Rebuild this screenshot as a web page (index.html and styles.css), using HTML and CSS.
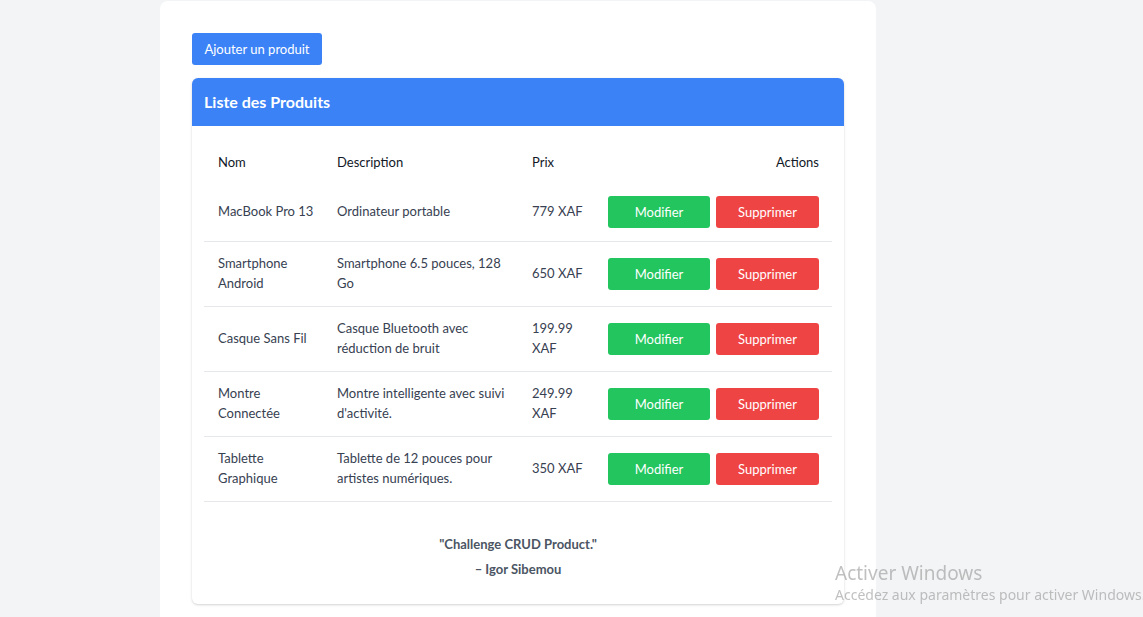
FILE: index.html
```html
<!DOCTYPE html>
<html lang="fr">
<head>
<meta charset="utf-8">
<title>Produits</title>
<link rel="stylesheet" href="styles.css">
</head>
<body>
<main class="page">
  <div class="toolbar">
    <button class="btn btn-blue add">Ajouter un produit</button>
  </div>
  <section class="card">
    <header class="card-head">Liste des Produits</header>
    <div class="card-body">
      <table class="tbl">
        <colgroup>
          <col class="c-nom"><col class="c-desc"><col class="c-prix"><col class="c-act">
        </colgroup>
        <thead>
          <tr><th>Nom</th><th>Description</th><th>Prix</th><th class="right">Actions</th></tr>
        </thead>
        <tbody>
          <tr><td>MacBook Pro 13</td><td>Ordinateur portable</td><td>779 XAF</td>
            <td class="acts"><button class="btn btn-green">Modifier</button><button class="btn btn-red">Supprimer</button></td></tr>
          <tr><td>Smartphone Android</td><td>Smartphone 6.5 pouces, 128 Go</td><td>650 XAF</td>
            <td class="acts"><button class="btn btn-green">Modifier</button><button class="btn btn-red">Supprimer</button></td></tr>
          <tr><td>Casque Sans Fil</td><td>Casque Bluetooth avec réduction de bruit</td><td>199.99 XAF</td>
            <td class="acts"><button class="btn btn-green">Modifier</button><button class="btn btn-red">Supprimer</button></td></tr>
          <tr><td>Montre Connectée</td><td>Montre intelligente avec suivi d'activité.</td><td>249.99 XAF</td>
            <td class="acts"><button class="btn btn-green">Modifier</button><button class="btn btn-red">Supprimer</button></td></tr>
          <tr><td>Tablette Graphique</td><td>Tablette de 12 pouces pour artistes numériques.</td><td>350 XAF</td>
            <td class="acts"><button class="btn btn-green">Modifier</button><button class="btn btn-red">Supprimer</button></td></tr>
        </tbody>
      </table>
      <footer class="quote">
        <p class="q">"Challenge CRUD Product."</p>
        <p class="a">– Igor Sibemou</p>
      </footer>
    </div>
  </section>
</main>
<div class="watermark">
  <div class="w1">Activer Windows</div>
  <div class="w2">Accédez aux paramètres pour activer Windows.</div>
</div>
</body>
</html>
```

FILE: styles.css
```css
* { box-sizing: border-box; }
html, body { margin: 0; padding: 0; }
body {
  background: #f3f4f6;
  font-family: Lato, "Noto Sans", sans-serif;
  font-size: 13px;
  color: #374151;
  overflow: hidden;
  height: 617px;
}
.page {
  margin: 1px 0 0 160px;
  width: 716px;
  min-height: 700px;
  background: #fff;
  border-radius: 8px;
  padding: 32px 32px;
}
.toolbar { display: flex; margin-bottom: 13px; }
.btn {
  font-family: inherit;
  font-size: 13px;
  line-height: 20px;
  border: 0;
  border-radius: 3px;
  color: #fff;
  height: 32px;
  padding: 0 12px;
  white-space: nowrap;
  cursor: pointer;
}
.btn-blue { background: #3b82f6; }
.btn-green { background: #22c55e; width: 102px; }
.btn-red { background: #ef4444; width: 103px; }
.add { width: 130px; }
.card {
  width: 652px;
  background: #fff;
  border-radius: 6px;
  box-shadow: 0 1px 3px rgba(0,0,0,0.12), 0 1px 2px rgba(0,0,0,0.06);
  overflow: hidden;
}
.card-head {
  background: #3b82f6;
  color: #fff;
  font-weight: 700;
  font-size: 16px;
  height: 48px;
  display: flex;
  align-items: center;
  padding: 0 12px 1px;
}
.card-body { padding: 14px 12px 22px; }
.tbl {
  width: 100%;
  border-collapse: collapse;
  table-layout: fixed;
}
.c-nom { width: 119px; }
.c-desc { width: 195px; }
.c-prix { width: 76px; }
.c-act { width: 238px; }
.tbl th {
  text-align: left;
  font-weight: 400;
  color: #111827;
  padding: 11.5px 6px 12px 14px;
  line-height: 20px;
}
.tbl th.right { text-align: right; padding-right: 13px; }
.tbl td {
  padding: 12.5px 6px 12.5px 14px;
  line-height: 19.5px;
  border-bottom: 1px solid #e5e7eb;
  vertical-align: middle;
}
.tbl td.acts { padding-right: 13px; text-align: right; white-space: nowrap; }
.tbl td.acts .btn + .btn { margin-left: 6px; }
.quote { text-align: center; margin-top: 30px; color: #4b5563; font-weight: 700; }
.quote p { margin: 0; line-height: 25px; }
.watermark {
  position: fixed;
  left: 835px;
  top: 561px;
  color: rgba(150,150,150,0.6);
  white-space: nowrap;
  font-family: "Noto Sans", sans-serif;
}
.w1 { font-size: 19px; line-height: 24px; }
.w2 { font-size: 14px; line-height: 20px; }
```
